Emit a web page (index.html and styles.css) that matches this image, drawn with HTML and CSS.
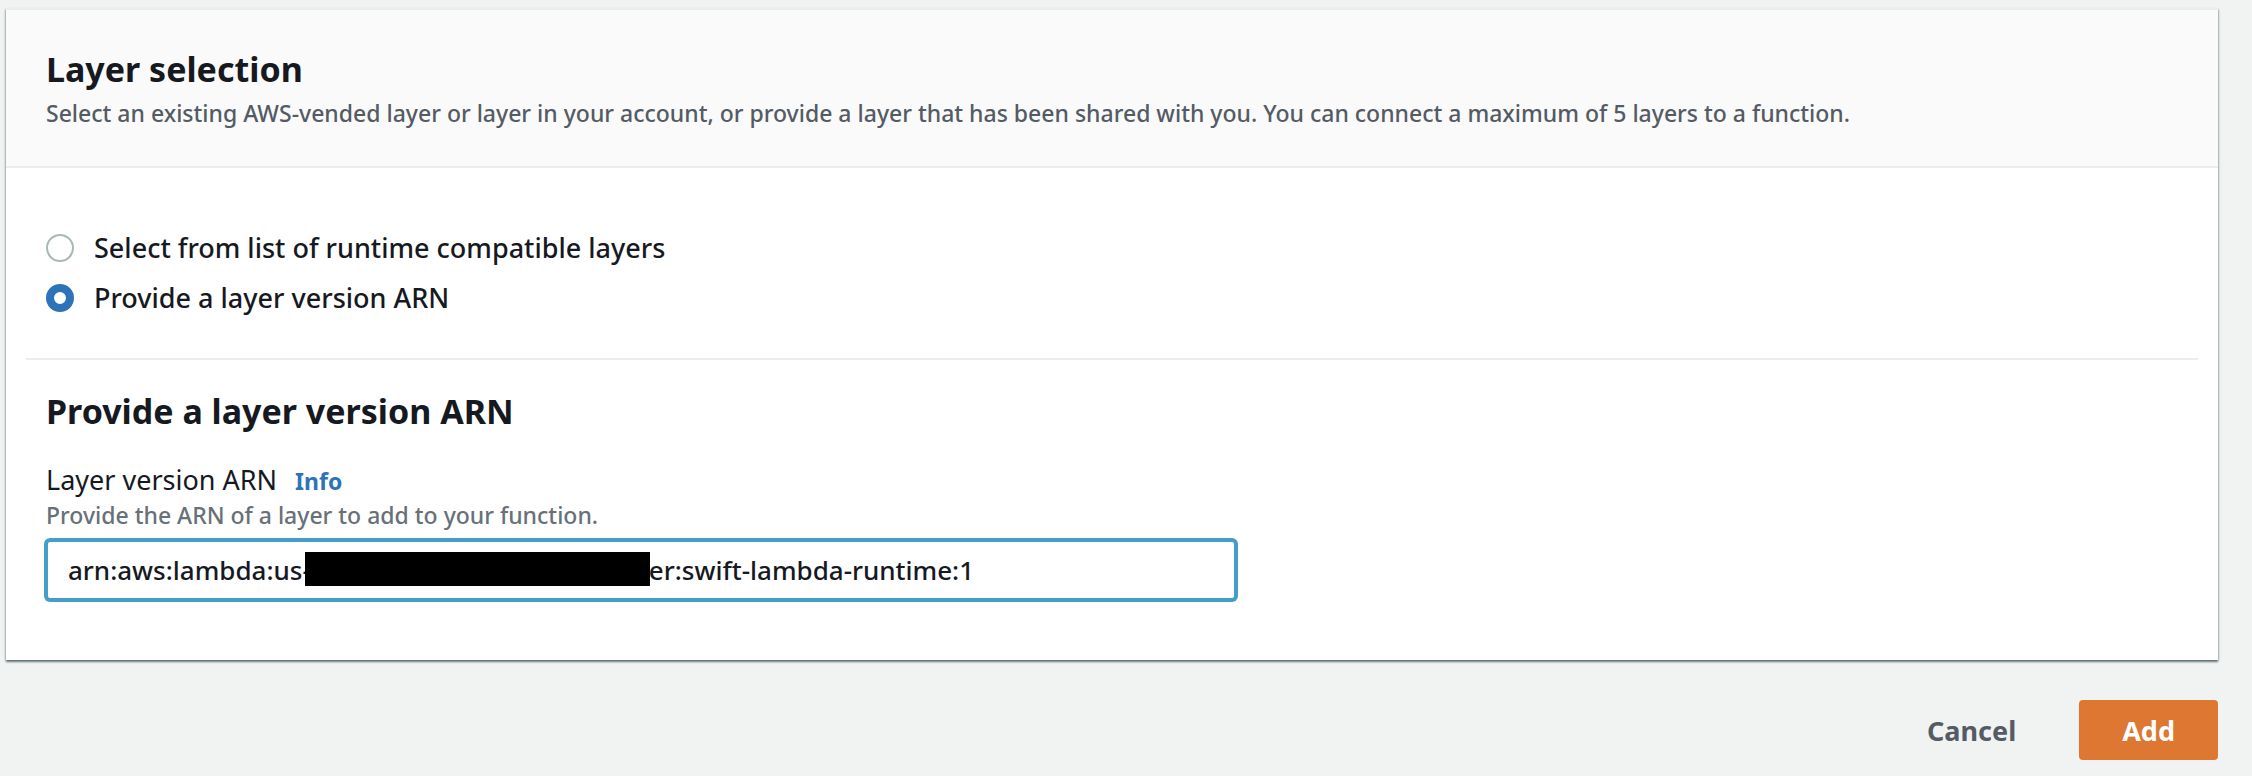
FILE: index.html
```html
<!DOCTYPE html>
<html lang="en">
<head>
  <meta charset="utf-8">
  <meta name="viewport" content="width=device-width, initial-scale=1">
  <title>Add layer</title>
  <link rel="stylesheet" href="styles.css">
</head>
<body>
  <form class="page">
    <section class="panel">
      <header class="panel-header">
        <h2 class="title">Layer selection</h2>
        <p class="description">Select an existing AWS-vended layer or layer in your account, or provide a layer that has been shared with you. You can connect a maximum of 5 layers to a function.</p>
      </header>
      <div class="panel-body">
        <div class="radio-group" role="radiogroup" aria-label="Layer source">
          <label class="radio-row"><input class="radio" type="radio" name="source" value="list"><span>Select from list of runtime compatible layers</span></label>
          <label class="radio-row"><input class="radio" type="radio" name="source" value="arn" checked><span>Provide a layer version ARN</span></label>
        </div>
        <hr class="divider">
        <div class="arn-section">
          <h2 class="title">Provide a layer version ARN</h2>
          <div class="field">
            <div class="label-row">
              <label class="label" for="arn">Layer version ARN</label>
              <a class="info" href="#info">Info</a>
            </div>
            <p class="hint" id="arn-hint">Provide the ARN of a layer to add to your function.</p>
            <div class="input-wrap">
              <input class="input" id="arn" type="text" spellcheck="false" aria-describedby="arn-hint" value="arn:aws:lambda:us-&nbsp;&nbsp;&nbsp;&nbsp;&nbsp;&nbsp;&nbsp;&nbsp;&nbsp;&nbsp;&nbsp;&nbsp;&nbsp;&nbsp;&nbsp;&nbsp;&nbsp;&nbsp;&nbsp;&nbsp;&nbsp;&nbsp;&nbsp;&nbsp;&nbsp;&nbsp;&nbsp;&nbsp;&nbsp;&nbsp;&nbsp;&nbsp;&nbsp;&nbsp;&nbsp;&nbsp;&nbsp;&nbsp;&nbsp;&nbsp;&nbsp;&nbsp;&nbsp;&nbsp;&nbsp;&nbsp;&nbsp;&nbsp;&nbsp;&nbsp;er:swift-lambda-runtime:1">
              <span class="redaction" aria-hidden="true"></span>
            </div>
          </div>
        </div>
      </div>
    </section>
    <div class="actions">
      <button class="button" type="button">Cancel</button>
      <button class="button button-primary" type="submit">Add</button>
    </div>
  </form>
</body>
</html>
```
FILE: styles.css
```css
* {
  box-sizing: border-box;
}

body {
  margin: 0;
  background: #f1f3f3;
  color: #16191f;
  font-family: "Noto Sans", "Open Sans", sans-serif;
  font-size: 27px;
}

h2,
p {
  margin: 0;
}

.page {
  padding: 8px 34px 16px 6px;
}

.panel {
  background: #fff;
  border-top: 2px solid #eaeded;
  box-shadow:
    0 2px 2px 0 rgba(0, 28, 36, 0.5),
    1px 1px 2px 0 rgba(0, 28, 36, 0.15),
    -1px 1px 2px 0 rgba(0, 28, 36, 0.15);
}

.panel-header {
  display: flex;
  flex-direction: column;
  gap: 6px;
  padding: 37px 40px;
  background: #fafafa;
  border-bottom: 2px solid #eaeded;
}

.title {
  font-size: 34px;
  line-height: 44px;
  font-weight: 700;
}

.description,
.hint {
  font-size: 23px;
  font-weight: 500;
  line-height: 32px;
}

.description {
  color: #545b64;
}

.hint {
  color: #687078;
}

.panel-body {
  padding: 60px 20px;
}

.radio-group {
  display: flex;
  flex-direction: column;
  align-items: flex-start;
  gap: 10px;
  padding: 0 20px;
}

.radio-row {
  display: flex;
  align-items: center;
  gap: 20px;
  font-weight: 500;
  line-height: 40px;
}

.radio {
  appearance: none;
  width: 28px;
  height: 28px;
  margin: 0;
  border: 2px solid #aab7b8;
  border-radius: 50%;
  background: #fff;
}

.radio:checked {
  border: 8px solid #2e73b8;
}

.divider {
  height: 2px;
  margin: 40px 0 29px;
  border: 0;
  background: #eaeded;
}

.arn-section {
  display: flex;
  flex-direction: column;
  gap: 29px;
  padding: 0 20px;
}

.field {
  width: 100%;
  max-width: 1190px;
}

.label-row {
  display: flex;
  align-items: baseline;
  gap: 18px;
  line-height: 36px;
}

.info {
  color: #2e73b8;
  font-size: 23px;
  font-weight: 700;
  text-decoration: none;
}

.input-wrap {
  position: relative;
  margin-top: 9px;
}

.input {
  display: block;
  width: 100%;
  height: 60px;
  padding: 0 20px;
  border: 2px solid #449fc8;
  border-radius: 4px;
  outline: 0;
  background: #fff;
  box-shadow: 0 0 0 2px #449fc8;
  color: inherit;
  font-family: inherit;
  font-size: 26px;
  font-weight: 500;
}

.redaction {
  position: absolute;
  top: 12px;
  left: 259px;
  width: 345px;
  height: 34px;
  background: #000;
}

.actions {
  display: flex;
  justify-content: flex-end;
  gap: 20px;
  margin-top: 40px;
}

.button {
  height: 60px;
  padding: 0 43px;
  border: 0;
  border-radius: 4px;
  background: transparent;
  color: #545b64;
  font-family: inherit;
  font-size: 27px;
  font-weight: 700;
}

.button-primary {
  background: #dd7731;
  color: #fff;
}
```
